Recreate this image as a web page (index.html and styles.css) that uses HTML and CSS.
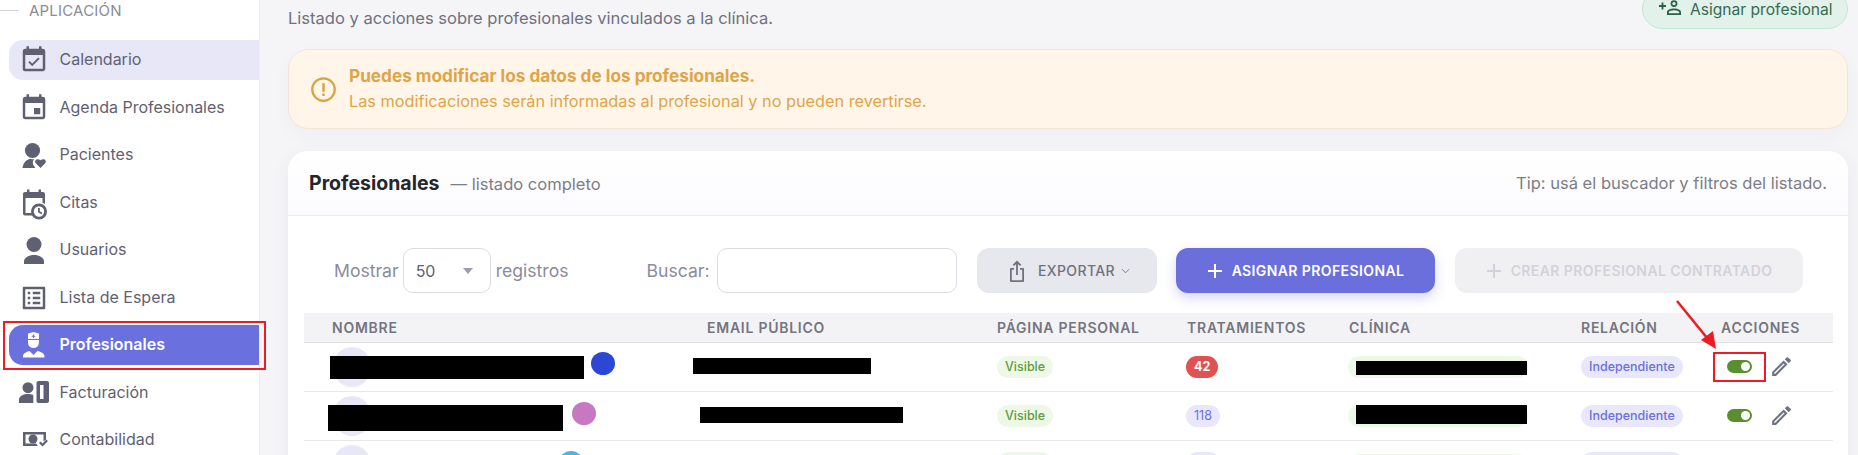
FILE: index.html
```html
<!DOCTYPE html>
<html lang="es">
<head>
<meta charset="utf-8">
<title>Profesionales</title>
<link rel="stylesheet" href="styles.css">
</head>
<body>
<div class="app">
  <aside class="sidebar">
    <div class="section"><span class="section-line"></span><span>APLICACIÓN</span></div>
    <nav class="nav">
      <a class="item soft"><svg class="ico" viewBox="0 0 24 24"><path d="M19 3h-1V1h-2v2H8V1H6v2H5c-1.11 0-1.99.9-1.99 2L3 19a2 2 0 0 0 2 2h14c1.1 0 2-.9 2-2V5c0-1.1-.9-2-2-2zm0 16H5V8h14v11zM16.53 11.06 15.47 10l-4.88 4.88-2.12-2.12-1.06 1.06L10.59 17l5.94-5.94z"/></svg><span>Calendario</span></a>
      <a class="item"><svg class="ico" viewBox="0 0 24 24"><path d="M17 12h-5v5h5v-5zM16 1v2H8V1H6v2H5c-1.11 0-1.99.9-1.99 2L3 19c0 1.1.89 2 2 2h14c1.1 0 2-.9 2-2V5c0-1.1-.9-2-2-2h-1V1h-2zm3 18H5V8h14v11z"/></svg><span>Agenda Profesionales</span></a>
      <a class="item"><svg class="ico" viewBox="0 0 30 30"><circle cx="13.500" cy="10.500" r="7.600"/><path d="M3.500 28c.5-4.500 3.500-8.500 8-9.300 1.200.4 2.500.5 3.800.5-1 .8-1.500 2-1.500 3.300 0 2 1.200 3.500 2.500 5.500z"/><path d="M21.500 28l-4.700-4.700c-2-2.500 1.200-5.600 4.700-3 3.500-2.600 6.700.5 4.700 3z"/></svg><span>Pacientes</span></a>
      <a class="item"><svg class="ico" viewBox="0 0 30 30"><path d="M6 4h2V1.500h2.500V4h9V1.500H22V4h2c1.100 0 2 .9 2 2v10a9 9 0 0 0-2.500-.9V10h-17v15h6.700c.2.900.6 1.700 1.100 2.500H6c-1.100 0-2-.9-2-2V6c0-1.100.9-2 2-2z"/><path fill-rule="evenodd" d="M20 15.500a8 8 0 1 1 0 16 8 8 0 0 1 0-16zm0 2.800a5.200 5.200 0 1 0 0 10.400 5.200 5.200 0 0 0 0-10.400zm-1 1.700h1.800v3.300l2.500 1.500-.9 1.400-3.400-2z"/></svg><span>Citas</span></a>
      <a class="item"><svg class="ico" viewBox="0 0 30 30"><circle cx="15" cy="9.500" r="7.500"/><path d="M5 29v-2.500c0-4 5-6.500 10-6.500s10 2.500 10 6.500V29z"/></svg><span>Usuarios</span></a>
      <a class="item"><svg class="ico" viewBox="0 0 24 24"><path d="M19 5v14H5V5h14m1.100-2H3.900c-.5 0-.9.400-.9.900v16.200c0 .400.400.900.900.900h16.200c.400 0 .900-.5.900-.9V3.900c0-.5-.5-.9-.9-.9zM11 7h6v2h-6V7zm0 4h6v2h-6v-2zm0 4h6v2h-6v-2zM7 7h2v2H7zm0 4h2v2H7zm0 4h2v2H7z"/></svg><span>Lista de Espera</span></a>
      <a class="item active"><svg class="ico" viewBox="0 0 30 30"><path fill-rule="evenodd" d="M9 3.500 14.500 2l5.500 1.500V9H9zm4.900 1v1.300h-1.300v1h1.300v1.300h1.200V6.800h1.300v-1h-1.300V4.500z"/><path d="M9 10h11v2.500a5.500 5.500 0 0 1-11 0z"/><path d="M10.500 21l4 4 4-4c3.500.8 6.500 2 7 5v1.500H4V26c.5-3 3.500-4.200 6.500-5z"/></svg><span>Profesionales</span></a>
      <a class="item"><svg class="ico" viewBox="0 0 30 30"><circle cx="9" cy="9.700" r="5.500"/><path d="M0 25v-3.500c0-3.500 4.500-5.500 9-5.500 2 0 3.800.4 5.300 1.100V25z"/><path fill-rule="evenodd" d="M19.500 3H28c1.100 0 2 .9 2 2v18c0 1.100-.9 2-2 2h-8.500c-1.100 0-2-.9-2-2V5c0-1.100.9-2 2-2zm1.500 4v14h3.500V7z"/></svg><span>Facturación</span></a>
      <a class="item"><svg class="ico" viewBox="0 0 30 30"><path d="M4 7h23v7.500l-2.500 2V9.500h-18v9H17l2 2.500H4z"/><circle cx="14" cy="14" r="4.500"/><path d="M20 18l1.500-1.500 2 2 4-4 1.500 1.500-5.500 5.500z"/></svg><span>Contabilidad</span></a>
    </nav>
  </aside>

  <main class="main">
    <header class="top">
      <p class="lead">Listado y acciones sobre profesionales vinculados a la clínica.</p>
      <button class="assign-top"><svg class="ico-s" viewBox="0 0 24 24"><path fill-rule="evenodd" d="M17 3.200a3.400 3.400 0 1 1 0 6.800 3.400 3.400 0 0 1 0-6.800zm0 1.700a1.700 1.700 0 1 0 0 3.400 1.700 1.700 0 0 0 0-3.400zM17 11.500c3.500 0 7 1.300 7 3.700v2.800H10v-2.800c0-2.400 3.500-3.700 7-3.700zm0 1.700c-2.700 0-5.200.9-5.200 2v1.100h10.400v-1.100c0-1.100-2.500-2-5.200-2z"/><path d="M4.600 5.500h1.800v2.600H9v1.800H6.400v2.600H4.600V9.900H2V8.100h2.600z"/></svg>Asignar profesional</button>
    </header>

    <section class="alert">
      <svg class="alert-ico" viewBox="0 0 24 24"><circle cx="12" cy="12" r="10" fill="none" stroke="currentColor" stroke-width="2"/><path d="M10.900 6.500h2.200v7.500h-2.200zM10.900 15.500h2.200v2.200h-2.200z" fill="currentColor"/></svg>
      <div>
        <div class="alert-title">Puedes modificar los datos de los profesionales.</div>
        <div class="alert-body">Las modificaciones serán informadas al profesional y no pueden revertirse.</div>
      </div>
    </section>

    <section class="card">
      <div class="card-head">
        <div><strong class="card-title">Profesionales</strong><span class="card-sub">— listado completo</span></div>
        <div class="tip">Tip: usá el buscador y filtros del listado.</div>
      </div>
      <div class="toolbar">
        <label class="lbl lbl-show">Mostrar</label>
        <div class="select"><span>50</span><i class="caret"></i></div>
        <label class="lbl lbl-reg">registros</label>
        <label class="lbl lbl-search">Buscar:</label>
        <div class="input"></div>
        <button class="btn btn-export"><svg class="ico-exp" viewBox="0 0 24 24"><path d="M12 1.500 7.700 5.800l1.300 1.300 2.100-2.100V16h1.800V5l2.100 2.100 1.300-1.300zM6 9h3v1.800H6.800v10.400h10.400V10.800H15V9h3c.6 0 1 .4 1 1v12c0 .6-.4 1-1 1H6c-.6 0-1-.4-1-1V10c0-.6.400-1 1-1z"/></svg><span>EXPORTAR</span><svg class="chev" viewBox="0 0 10 6"><path d="M1 1l4 4 4-4" fill="none" stroke="currentColor"/></svg></button>
        <button class="btn btn-primary"><svg class="plus" viewBox="0 0 14 14"><path d="M6 0h2v6h6v2H8v6H6V8H0V6h6z"/></svg>ASIGNAR PROFESIONAL</button>
        <button class="btn btn-disabled"><svg class="plus" viewBox="0 0 14 14"><path d="M6 0h2v6h6v2H8v6H6V8H0V6h6z"/></svg>CREAR PROFESIONAL CONTRATADO</button>
      </div>

      <table class="table">
        <colgroup><col class="c1"><col class="c2"><col class="c3"><col class="c4"><col class="c5"><col class="c6"><col class="c7"></colgroup>
        <thead>
          <tr><th>NOMBRE</th><th>EMAIL PÚBLICO</th><th>PÁGINA PERSONAL</th><th>TRATAMIENTOS</th><th>CLÍNICA</th><th>RELACIÓN</th><th>ACCIONES</th></tr>
        </thead>
        <tbody>
          <tr>
            <td class="cell"><span class="avatar"></span><span class="redact n1"></span><span class="dot d1"></span></td>
            <td class="cell"><span class="redact e1"></span></td>
            <td><span class="pill green">Visible</span></td>
            <td><span class="pill red">42</span></td>
            <td class="cell"><span class="pill green wide"></span><span class="redact c-1"></span></td>
            <td><span class="pill lilac">Independiente</span></td>
            <td><div class="acts"><span class="toggle"></span><svg class="pen" viewBox="0 0 24 24"><path d="M3 17.250V21h3.750L17.810 9.940l-3.750-3.750L3 17.250zM5.920 19H5v-.92l9.060-9.060.92.92L5.920 19zM20.710 5.630l-2.340-2.340c-.2-.2-.45-.29-.71-.29s-.51.1-.7.28l-1.830 1.830 3.750 3.750 1.830-1.830c.39-.39.39-1.020 0-1.410z"/></svg></div></td>
          </tr>
          <tr>
            <td class="cell"><span class="avatar"></span><span class="redact n2"></span><span class="dot d2"></span></td>
            <td class="cell"><span class="redact e2"></span></td>
            <td><span class="pill green">Visible</span></td>
            <td><span class="pill lilac num">118</span></td>
            <td class="cell"><span class="pill green wide"></span><span class="redact c-2"></span></td>
            <td><span class="pill lilac">Independiente</span></td>
            <td><div class="acts"><span class="toggle"></span><svg class="pen" viewBox="0 0 24 24"><path d="M3 17.250V21h3.750L17.810 9.940l-3.750-3.750L3 17.250zM5.920 19H5v-.92l9.060-9.060.92.92L5.920 19zM20.710 5.630l-2.340-2.340c-.2-.2-.45-.29-.71-.29s-.51.1-.7.28l-1.830 1.830 3.750 3.750 1.830-1.830c.39-.39.39-1.020 0-1.410z"/></svg></div></td>
          </tr>
          <tr>
            <td class="cell"><span class="avatar"></span><span class="dot d3"></span></td>
            <td></td>
            <td><span class="pill green blank-v"></span></td>
            <td><span class="pill lilac num blank-n"></span></td>
            <td class="cell"><span class="pill green wide"></span></td>
            <td><span class="pill lilac blank-i"></span></td>
            <td></td>
          </tr>
        </tbody>
      </table>
    </section>
  </main>
</div>
<div class="mark mark-nav"></div>
<div class="mark mark-toggle"></div>
<svg class="arrow" viewBox="0 0 50 60"><path d="M1 1 36 44" stroke="#ed1c24" stroke-width="2.500" fill="none"/><path d="M40 49 25 40 37 31z" fill="#ed1c24"/></svg>
</body>
</html>
```

FILE: styles.css
```css
* { box-sizing: border-box; }
html, body { margin: 0; height: 455px; overflow: hidden; }
body { font-family: Inter, "Liberation Sans", sans-serif; background: #f5f5f8; color: #5f6172; position: relative; }
.app { display: flex; height: 455px; overflow: hidden; }

.sidebar { width: 260px; flex: none; background: #fff; border-right: 1px solid #eeeef2; }
.section { display: flex; align-items: center; gap: 10px; height: 20px; color: #8a8c99; font-size: 15px; letter-spacing: .2px; }
.section-line { width: 19px; height: 1px; background: #d6d7dd; }
.nav { display: flex; flex-direction: column; gap: 7.5px; padding: 20px 0 0 9px; }
.item { display: flex; align-items: center; gap: 10.500px; height: 40px; padding: 0 0 2px 10px; font-size: 16px; color: #5f6172; border-radius: 14px 0 0 14px; }
.item .ico { width: 30px; height: 30px; flex: none; fill: #5f6172; overflow: visible; margin-bottom: -2px; }
.item.soft { background: #e7e7f8; }
.item.active { background: #6a70dd; color: #fff; font-weight: 600; }
.item.active .ico { fill: #fff; }

.main { flex: 1; min-width: 0; padding: 0 10px 0 28px; }
.top { display: flex; justify-content: space-between; align-items: flex-end; height: 29px; margin-bottom: 20px; }
.lead { margin: 0; font-size: 16.550px; color: #6f7180; line-height: 22px; }
.assign-top { display: flex; align-items: center; gap: 9px; flex: none; height: 40px; width: 206px; margin: 0; padding: 0 0 0 14px; border: 1px solid #c4e8d2; border-radius: 20px; background: #e2f1e9; color: #356c52; font: 400 15.600px Inter, sans-serif; white-space: nowrap; }
.ico-s { width: 24px; height: 24px; fill: #2a6248; flex: none; }

.alert { display: flex; align-items: center; gap: 12px; height: 80px; padding: 0 21px; margin-bottom: 22px; background: #fff5e8; border: 1px solid #f2e6d6; border-radius: 20px; color: #dea548; box-shadow: 0 6px 20px rgba(40, 40, 60, .03); }
.alert-ico { width: 27px; height: 27px; flex: none; color: #d9a441; }
.alert-title { font-size: 17.200px; font-weight: 700; line-height: 24px; }
.alert-body { font-size: 16.270px; line-height: 26px; }

.card { background: #fff; border-radius: 20px 20px 0 0; box-shadow: 0 4px 20px rgba(40, 40, 60, .05); height: 320px; overflow: hidden; }
.card-head { display: flex; align-items: center; justify-content: space-between; height: 65px; padding: 0 21px; background: linear-gradient(#fff, #fbfbfe); border-bottom: 1px solid #ececf0; }
.card-title { font-size: 19.500px; font-weight: 700; color: #25262b; margin-right: 11px; }
.card-sub, .tip { font-size: 16.550px; color: #7c7d85; }

.toolbar { display: flex; align-items: center; height: 45px; margin: 32px 0 20px; padding-left: 46px; }
.lbl { font-size: 17.600px; color: #8b8c9b; }
.lbl-reg { margin-left: 5px; }
.lbl-search { margin-left: 78px; margin-right: 8px; }
.select { display: flex; align-items: center; justify-content: space-between; width: 88px; height: 45px; margin-left: 4px; padding: 0 17px 0 12px; border: 1px solid #dcdce2; border-radius: 10px; font-size: 16px; color: #5f6172; }
.caret { width: 0; height: 0; border: 5px solid transparent; border-top: 6px solid #9c9da8; border-bottom: 0; }
.input { width: 240px; height: 45px; border: 1px solid #dcdce2; border-radius: 10px; }
.btn { display: flex; align-items: center; justify-content: center; flex: none; height: 45px; margin: 0 0 0 20px; padding: 0; border: 0; border-radius: 12px; font: 600 14px Inter, sans-serif; letter-spacing: .4px; white-space: nowrap; }
.btn-export { width: 180px; background: #e7e8ed; color: #70727f; font-weight: 500; }
.ico-exp { width: 24px; height: 24px; fill: #70727f; margin-right: 9px; }
.chev { width: 9px; height: 6px; margin-left: 6px; color: #70727f; }
.btn-primary { width: 259px; margin-left: 19px; background: #6a6fdc; color: #fff; box-shadow: 0 5px 12px rgba(90, 95, 200, .25); }
.btn-disabled { width: 348px; background: #f0f0f3; color: #d2d3d8; }
.plus { width: 14px; height: 14px; fill: currentColor; margin-right: 10px; }

.table { width: 1529px; margin-left: 16px; border-collapse: collapse; table-layout: fixed; }
.c1 { width: 375px; } .c2 { width: 290px; } .c3 { width: 190px; } .c4 { width: 162px; }
.c5 { width: 232px; } .c6 { width: 140px; } .c7 { width: 140px; }
th { height: 29px; padding: 0 0 0 28px; background: #f3f3f6; border-bottom: 1px solid #dfdfe4; text-align: left; font-size: 14px; font-weight: 600; letter-spacing: .75px; color: #74757f; }
td { height: 49px; padding: 0 0 0 28px; border-bottom: 1px solid #e9e9ed; font-size: 12.500px; vertical-align: middle; }
.cell { position: relative; }

.avatar { display: block; width: 38px; height: 40px; margin-left: 1px; border-radius: 50%; background: #e8e7f8; }
.redact { position: absolute; background: #000; }
.n1 { left: 26px; top: 13px; width: 254px; height: 23px; }
.n2 { left: 24px; top: 13px; width: 235px; height: 26px; }
.e1 { left: 14px; top: 15px; width: 178px; height: 16px; }
.e2 { left: 21px; top: 15px; width: 203px; height: 16px; }
.c-1 { left: 35px; top: 18px; width: 171px; height: 14px; }
.c-2 { left: 35px; top: 13px; width: 171px; height: 19px; }
.dot { position: absolute; width: 24px; height: 23px; border-radius: 50%; }
.d1 { left: 287px; top: 9px; background: #2b47d4; }
.d2 { left: 268px; top: 10px; background: #c678c0; }
.d3 { left: 255px; top: 10px; background: #4fb3e8; }

.pill { display: inline-flex; align-items: center; height: 22px; padding: 0 8px; border-radius: 11px; font-weight: 500; }
.green { background: #edf8e7; color: #609c40; }
.red { background: #e05252; color: #fff; font-weight: 700; margin-left: -1px; padding: 0 8px; }
.lilac { background: #e8e8fa; color: #6b70dd; }
.num { margin-left: -1px; font-weight: 400; }
.wide { display: flex; width: 180px; margin-left: -1px; }
.blank-v { width: 55px; }
.blank-n { width: 34px; }
.blank-i { width: 102px; }

.acts { display: flex; align-items: center; gap: 17px; padding-left: 6px; }
.toggle { position: relative; display: block; flex: none; width: 25px; height: 13px; border-radius: 7px; background: #5a8f2f; }
.toggle::after { content: ""; position: absolute; right: 2px; top: 2px; width: 9px; height: 9px; border-radius: 50%; background: #fff; }
.pen { width: 25px; height: 25px; fill: #6f7282; flex: none; }

.mark { position: absolute; }
.mark-nav { left: 3px; top: 321px; width: 263px; height: 49px; border: 2.500px solid #ed1c24; }
.mark-toggle { left: 1713px; top: 352px; width: 53px; height: 30px; border: 2px solid #ed1c24; }
.arrow { position: absolute; left: 1676px; top: 300px; width: 50px; height: 60px; }
```
